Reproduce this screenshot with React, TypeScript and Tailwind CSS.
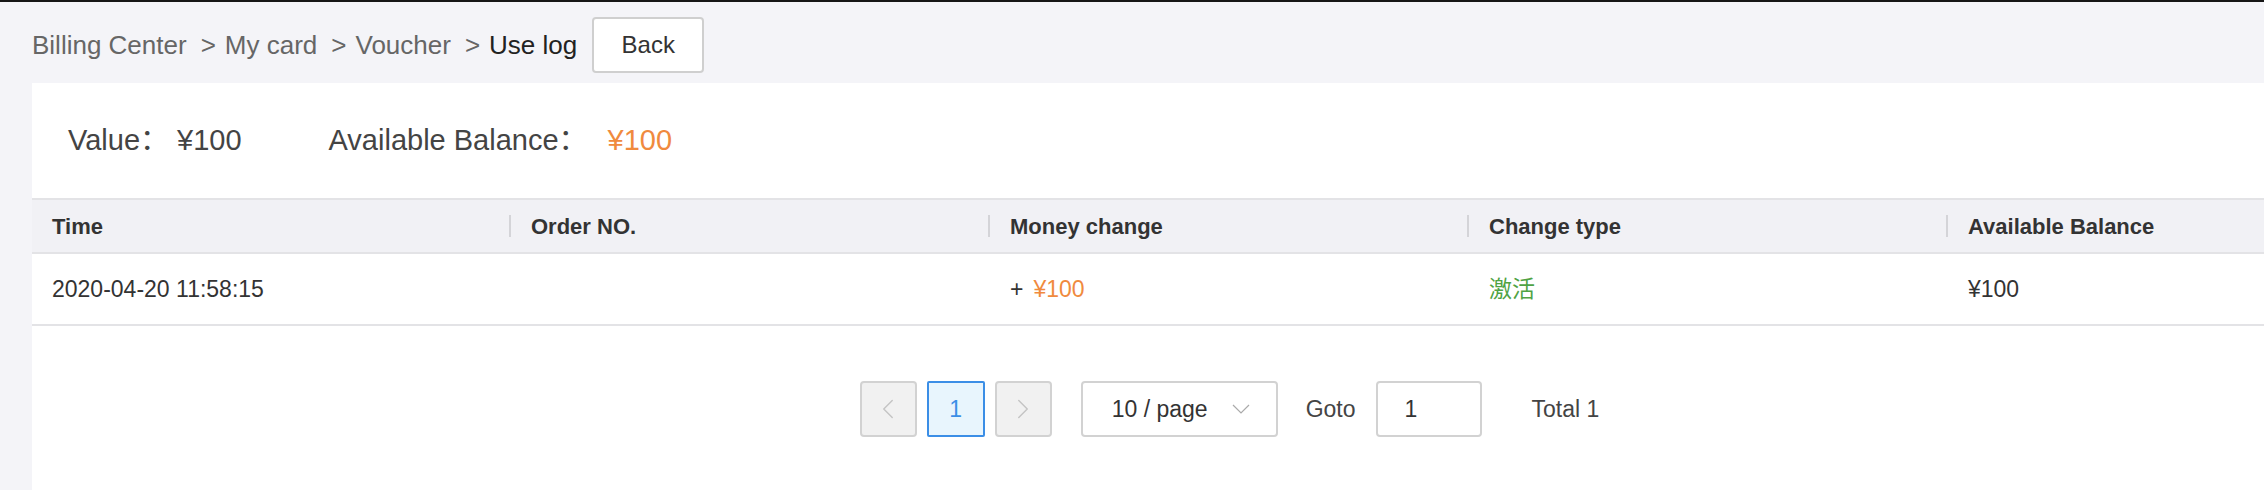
import { ChevronLeft, ChevronRight } from "lucide-react";

const font = { fontFamily: '"Liberation Sans", "Noto Sans CJK SC", sans-serif' };

const columns = ["Time", "Order NO.", "Money change", "Change type", "Available Balance"];

function Crumbs() {
  const items = ["Billing Center", "My card", "Voucher"];
  return (
    <div className="flex items-center text-[26px] text-[#666]">
      {items.map((item) => (
        <span key={item} className="flex items-center">
          <span>{item}</span>
          <span className="ml-[14px] mr-[9px]">&gt;</span>
        </span>
      ))}
      <span className="text-[#222]">Use log</span>
    </div>
  );
}

function Pager() {
  return (
    <div className="flex items-center justify-center text-[23px] text-[#444]">
      <button className="w-[57px] h-[56px] flex items-center justify-center rounded-[4px] border-2 border-[#d2d2d2] bg-[#f1f1f1] text-[#c4c4c4]">
        <ChevronLeft size={34} strokeWidth={1} />
      </button>
      <button className="ml-[10px] w-[58px] h-[56px] flex items-center justify-center rounded-[2px] border-2 border-[#3b8ee6] bg-[#e8f5fd] text-[#3b8ee6]">
        1
      </button>
      <button className="ml-[10px] w-[57px] h-[56px] flex items-center justify-center rounded-[4px] border-2 border-[#d2d2d2] bg-[#f1f1f1] text-[#c4c4c4]">
        <ChevronRight size={34} strokeWidth={1} />
      </button>
      <div className="ml-[29px] w-[197px] h-[56px] flex items-center rounded-[4px] border-2 border-[#d2d2d2] bg-white pl-[29px] pr-[26px]">
        <span className="flex-1 text-[#333]">10 / page</span>
        <svg width="18" height="10" viewBox="0 0 18 10" fill="none" stroke="#aaa" strokeWidth="1.2">
          <polyline points="1,1 9,9 17,1" />
        </svg>
      </div>
      <span className="ml-[28px]">Goto</span>
      <div className="ml-[20px] w-[106px] h-[56px] flex items-center rounded-[4px] border-2 border-[#d2d2d2] bg-white pl-[27px] text-[#333]">
        1
      </div>
      <span className="ml-[50px]">Total 1</span>
    </div>
  );
}

export default function App() {
  return (
    <div style={font} className="h-[490px] w-full overflow-hidden border-t-2 border-[#161616] bg-[#f4f4f8] flex flex-col">
      <div className="flex items-center pl-8 pt-[15px]">
        <Crumbs />
        <button className="ml-[15px] w-[112px] h-[56px] rounded-[4px] border-2 border-[#cfcfcf] bg-white text-[24px] text-[#333]">
          Back
        </button>
      </div>
      <div className="ml-8 mt-[10px] w-[2395px] flex-1 bg-white">
        <div className="h-[115px] flex items-center pl-9 text-[29px] text-[#444]">
          <span>Value：</span>
          <span className="ml-[8px]">¥100</span>
          <span className="ml-[87px]">Available Balance：</span>
          <span className="ml-[20px] text-[#f08a3e]">¥100</span>
        </div>
        <div className="flex h-[56px] border-y-2 border-[#e3e3e6] bg-[#f1f1f5] text-[22px] font-semibold text-[#333]">
          {columns.map((c, i) => (
            <div key={c} className="w-[479px] flex items-center justify-between pl-5">
              <span>{c}</span>
              {i < columns.length - 1 && <span className="w-[2px] h-[22px] bg-[#d4d4d8]" />}
            </div>
          ))}
        </div>
        <div className="flex h-[72px] border-b-2 border-[#e3e3e6] text-[23px] text-[#333]">
          <div className="w-[479px] flex items-center pl-5">2020-04-20 11:58:15</div>
          <div className="w-[479px] flex items-center pl-5" />
          <div className="w-[479px] flex items-center pl-5">
            <span>+</span>
            <span className="ml-[10px] text-[#f08a3e]">¥100</span>
          </div>
          <div className="w-[479px] flex items-center pl-5 text-[#4fa344]">激活</div>
          <div className="w-[479px] flex items-center pl-5">¥100</div>
        </div>
        <div className="mt-[55px]">
          <Pager />
        </div>
      </div>
    </div>
  );
}
